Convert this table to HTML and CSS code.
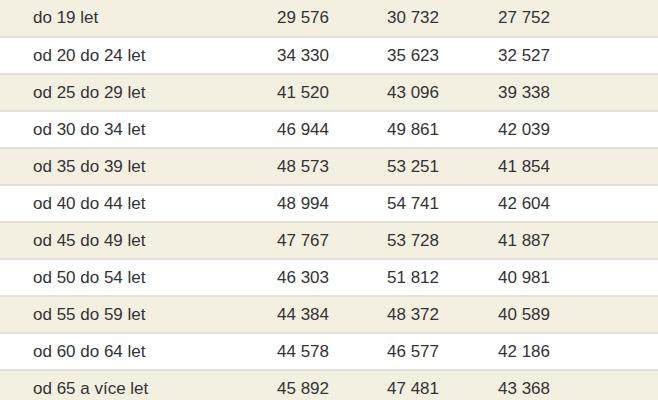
FILE: index.html
```html
<!DOCTYPE html>
<html lang="cs">
<head>
<meta charset="utf-8">
<link rel="stylesheet" href="styles.css">
</head>
<body>
<table class="wages">
<tbody>
<tr><td class="age">do 19 let</td><td>29 576</td><td>30 732</td><td>27 752</td></tr>
<tr><td class="age">od 20 do 24 let</td><td>34 330</td><td>35 623</td><td>32 527</td></tr>
<tr><td class="age">od 25 do 29 let</td><td>41 520</td><td>43 096</td><td>39 338</td></tr>
<tr><td class="age">od 30 do 34 let</td><td>46 944</td><td>49 861</td><td>42 039</td></tr>
<tr><td class="age">od 35 do 39 let</td><td>48 573</td><td>53 251</td><td>41 854</td></tr>
<tr><td class="age">od 40 do 44 let</td><td>48 994</td><td>54 741</td><td>42 604</td></tr>
<tr><td class="age">od 45 do 49 let</td><td>47 767</td><td>53 728</td><td>41 887</td></tr>
<tr><td class="age">od 50 do 54 let</td><td>46 303</td><td>51 812</td><td>40 981</td></tr>
<tr><td class="age">od 55 do 59 let</td><td>44 384</td><td>48 372</td><td>40 589</td></tr>
<tr><td class="age">od 60 do 64 let</td><td>44 578</td><td>46 577</td><td>42 186</td></tr>
<tr><td class="age">od 65 a více let</td><td>45 892</td><td>47 481</td><td>43 368</td></tr>
</tbody>
</table>
</body>
</html>
```
FILE: styles.css
```css
html, body {
  margin: 0;
  padding: 0;
  background: #ffffff;
}
.wages {
  width: 658px;
  border-collapse: collapse;
  font-family: "Liberation Sans", Arial, sans-serif;
  font-size: 17px;
  color: #333333;
  table-layout: fixed;
}
.wages tr {
  height: 37px;
  border-bottom: 2px solid #e2e0d8;
}
.wages tr:nth-child(odd) {
  background: #f3f0e2;
}
.wages td {
  padding: 0;
  vertical-align: middle;
  white-space: nowrap;
}
.wages td.age {
  width: 244px;
  padding-left: 33px;
}
.wages td:nth-child(2) { width: 110px; }
.wages td:nth-child(3) { width: 111px; }
.wages td:nth-child(4) { width: 160px; }
```
